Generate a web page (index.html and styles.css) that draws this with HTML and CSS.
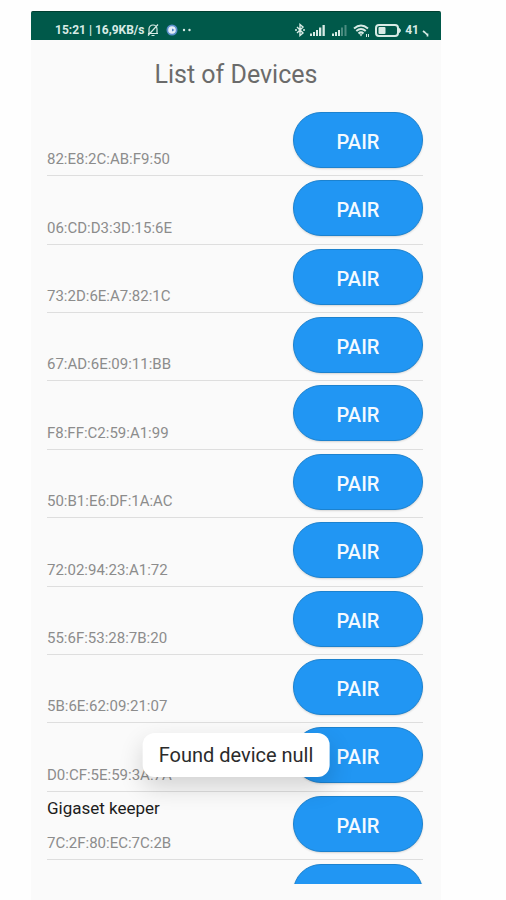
FILE: index.html
```html
<!DOCTYPE html>
<html lang="en">
<head>
<meta charset="utf-8">
<meta name="viewport" content="width=device-width, initial-scale=1">
<title>List of Devices</title>
<link rel="stylesheet" href="styles.css">
</head>
<body>
<div class="phone">
  <header class="status">
    <div class="status-group">
      <span class="status-text">15:21 | 16,9KB/s</span>
      <svg class="bell" width="12" height="14" viewBox="0 0 12 14" fill="none" stroke="currentColor" stroke-width="1.200"><path d="M2 10.500V6a4 4 0 0 1 8 0v4.500M1 10.500h10M4.500 12.500h3M11 1.500L1 12.500"/></svg>
      <svg class="app-dot" width="12" height="12" viewBox="0 0 12 12"><circle cx="6" cy="6" r="5.500" fill="#5b8fcb"/><circle cx="6" cy="6" r="3.800" fill="#e4edf7"/><path d="M6 4.500l2.500 1.500L6 7.500z" fill="#4b7fbf"/></svg>
      <svg width="12" height="4" viewBox="0 0 12 4" fill="currentColor"><circle cx="3" cy="2" r="1.200"/><circle cx="8.500" cy="2" r="1.200"/></svg>
    </div>
    <div class="status-group">
      <svg width="12" height="14" viewBox="0 0 12 14" fill="none" stroke="currentColor" stroke-width="1.400"><path d="M3 4l6 6-3 2.500v-11L9 4l-6 6M1 7h2M9 7h2"/></svg>
      <svg class="signal" width="17" height="12" viewBox="0 0 17 12" fill="currentColor"><path d="M1 9.500h2V12H1zM4 8h2v4H4zM7 6h2v6H7zM10 3.500h2.300V12H10zM13.500 1h2.300v11h-2.300z"/></svg>
      <svg class="signal" width="17" height="12" viewBox="0 0 17 12" fill="currentColor"><path d="M1 9.500h2V12H1zM4 8h2v4H4zM7 6h2v6H7z"/><path opacity=".35" d="M10 3.500h2V12h-2zM13.500 1h2v11h-2z"/></svg>
      <svg class="wifi" width="17" height="13" viewBox="0 0 17 13" fill="none" stroke="currentColor" stroke-width="2"><path d="M1 4.500Q8-1.500 15 4.500M3.300 7Q8 3 12.700 7M5.500 9.400Q8 7.300 10.500 9.400"/><path d="M6.500 10.300h3L8 12.500z" fill="currentColor" stroke="none"/><path d="M13.500 10v3M15.500 10v3" stroke-width="1"/></svg>
      <svg class="battery" width="27" height="13" viewBox="0 0 27 13"><rect x="1" y="1" width="22" height="11" rx="3" fill="none" stroke="currentColor" stroke-width="2"/><rect x="3.500" y="3" width="7" height="7" rx="1" fill="currentColor"/><path d="M24.500 4.500q2 2 0 4z" fill="currentColor" stroke="currentColor"/></svg>
      <span class="status-text">41</span>
      <svg class="percent" width="7" height="7" viewBox="0 0 7 7" fill="none" stroke="currentColor" stroke-width="1.700"><path d="M1 1l2 1.500M3 2.500L5.500 5M5.500 3.500v3"/></svg>
    </div>
  </header>
  <h1 class="title">List of Devices</h1>
  <ul class="devices">
    <li class="device"><div class="info"><span class="mac" id="d1">82:E8:2C:AB:F9:50</span></div><button class="pair" aria-describedby="d1">PAIR</button></li>
    <li class="device"><div class="info"><span class="mac" id="d2">06:CD:D3:3D:15:6E</span></div><button class="pair" aria-describedby="d2">PAIR</button></li>
    <li class="device"><div class="info"><span class="mac" id="d3">73:2D:6E:A7:82:1C</span></div><button class="pair" aria-describedby="d3">PAIR</button></li>
    <li class="device"><div class="info"><span class="mac" id="d4">67:AD:6E:09:11:BB</span></div><button class="pair" aria-describedby="d4">PAIR</button></li>
    <li class="device"><div class="info"><span class="mac" id="d5">F8:FF:C2:59:A1:99</span></div><button class="pair" aria-describedby="d5">PAIR</button></li>
    <li class="device"><div class="info"><span class="mac" id="d6">50:B1:E6:DF:1A:AC</span></div><button class="pair" aria-describedby="d6">PAIR</button></li>
    <li class="device"><div class="info"><span class="mac" id="d7">72:02:94:23:A1:72</span></div><button class="pair" aria-describedby="d7">PAIR</button></li>
    <li class="device"><div class="info"><span class="mac" id="d8">55:6F:53:28:7B:20</span></div><button class="pair" aria-describedby="d8">PAIR</button></li>
    <li class="device"><div class="info"><span class="mac" id="d9">5B:6E:62:09:21:07</span></div><button class="pair" aria-describedby="d9">PAIR</button></li>
    <li class="device"><div class="info"><span class="mac" id="d10">D0:CF:5E:59:3A:7A</span></div><button class="pair" aria-describedby="d10">PAIR</button></li>
    <li class="device"><div class="info"><span class="name">Gigaset keeper</span><span class="mac" id="d11">7C:2F:80:EC:7C:2B</span></div><button class="pair" aria-describedby="d11">PAIR</button></li>
    <li class="device peek"><div class="info"></div><button class="pair" aria-label="Pair"></button></li>
  </ul>
  <div class="toast" role="status">Found device null</div>
</div>
</body>
</html>
```

FILE: styles.css
```css
* {
  box-sizing: border-box;
}

body {
  margin: 0;
  padding: 11px 65px 0 31px;
  background: #fefefe;
  font-family: Roboto, "Liberation Sans", sans-serif;
}

.phone {
  position: relative;
  display: flex;
  flex-direction: column;
  height: calc(100vh - 11px);
  padding-bottom: 16px;
  background: #fafafa;
}

.status {
  display: flex;
  justify-content: space-between;
  height: 29px;
  padding: 8px 12px 0 24px;
  border-top: 1px solid #003f31;
  border-radius: 2px 2px 0 0;
  background: #00594a;
  color: #d8ebe5;
}

.status-group {
  display: flex;
  align-items: center;
  height: 20px;
  gap: 3px;
}

.status-text {
  font-size: 12px;
  font-weight: 700;
  line-height: 20px;
}

.app-dot {
  margin-left: 4px;
}

.signal,
.wifi {
  margin-right: 2px;
}

.percent {
  align-self: flex-end;
  margin-bottom: 3px;
}

.title {
  margin: 0;
  padding-top: 20px;
  height: 68px;
  font-size: 25px;
  font-weight: 400;
  line-height: 30px;
  text-align: center;
  color: #6b6b6b;
}

.devices {
  flex: 1;
  display: grid;
  grid-template-rows: repeat(11, minmax(68px, 1fr)) 24px;
  margin: 0;
  padding: 0 18px 0 16px;
  overflow: hidden;
  list-style: none;
}

.device {
  display: flex;
  align-items: flex-start;
  padding-top: 4px;
  border-bottom: 1px solid #dedede;
}

.peek {
  border-bottom: 0;
}

.info {
  flex: 1;
  align-self: stretch;
  display: flex;
  flex-direction: column;
  justify-content: space-between;
  padding-bottom: 6px;
}

.name {
  font-size: 17px;
  line-height: 20px;
  padding-top: 2px;
  color: #1c1c1c;
}

.mac {
  margin-top: auto;
  font-size: 15px;
  line-height: 20px;
  color: #8c8c8c;
}

.pair {
  flex: none;
  width: 130px;
  height: 56px;
  padding: 4px 0 0;
  border: 1px solid #1c82cf;
  border-radius: 28px;
  background: #2196f3;
  box-shadow: 0 1px 2px rgba(0, 0, 0, 0.15);
  color: #f4faff;
  font-family: inherit;
  font-size: 20px;
  font-weight: 500;
}

.toast {
  position: absolute;
  bottom: 123px;
  left: 50%;
  transform: translateX(-50%);
  padding: 0 16px;
  border-radius: 12px;
  background: #fff;
  box-shadow: 0 10px 24px rgba(0, 0, 0, 0.16);
  color: #2b2b2b;
  font-size: 20px;
  line-height: 44px;
  white-space: nowrap;
}
```
